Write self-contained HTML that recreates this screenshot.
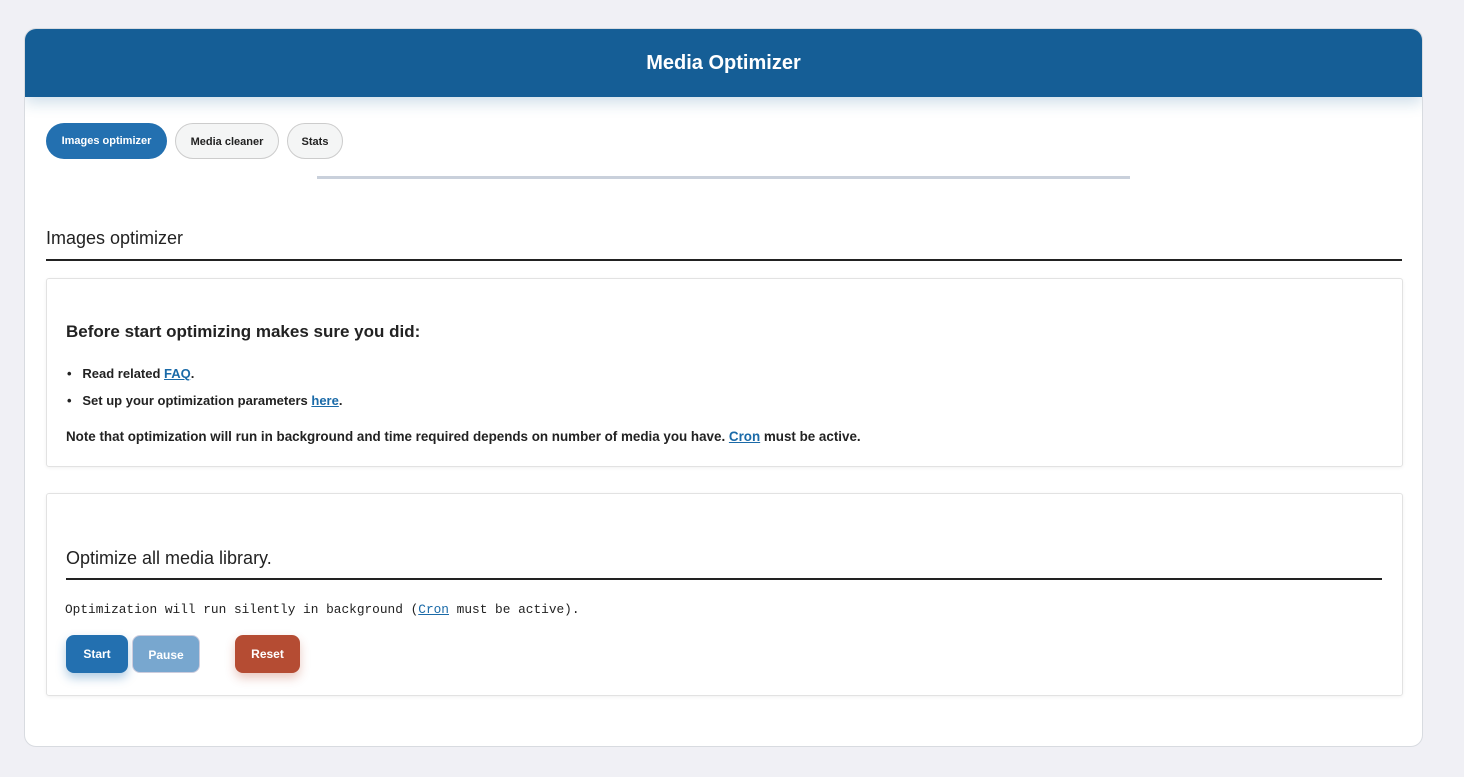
<!DOCTYPE html>
<html><head><meta charset="utf-8"><style>
body{margin:0;background:#f0f0f5;font-family:"Liberation Sans",sans-serif;color:#222;width:1464px;height:777px;overflow:hidden}
.wrap{position:absolute;left:24px;top:28px;width:1397px;height:717px;background:#fff;border:1px solid #d8dbe0;border-radius:12px;overflow:hidden}
.hdr{height:68px;background:#155e96;color:#fff;font-weight:bold;font-size:20px;text-align:center;line-height:68px;box-shadow:0 6px 14px rgba(21,94,150,.2)}
.tab{position:absolute;top:94px;height:36px;border-radius:18px;font-size:11px;font-weight:bold;line-height:36px;text-align:center;box-sizing:border-box}
.tab.a{background:#2370b0;color:#fff}
.tab.i{background:#f4f5f5;border:1px solid #ccc;color:#222}
.bar{position:absolute;left:292px;top:147px;width:813px;height:3px;background:#c9d0db}
h2{position:absolute;left:21px;top:199px;margin:0;font-size:18px;font-weight:normal}
.hl{position:absolute;left:21px;top:230px;width:1356px;height:2px;background:#222}
.box{position:absolute;left:21px;width:1355px;border:1px solid #e2e2e2;border-radius:3px;box-shadow:0 1px 3px rgba(0,0,0,.06)}
h3{margin:0;font-size:18px;font-weight:bold;color:#222}
.t{font-size:13px;font-weight:bold;position:absolute;left:20px}
a{color:#1a6aa8;text-decoration:underline}
.btn{position:absolute;top:141px;height:38px;border-radius:8px;color:#fff;font-size:12px;font-weight:bold;line-height:38px;text-align:center;box-sizing:border-box}
</style></head><body>
<div class="wrap">
<div class="hdr">Media Optimizer</div>
<div class="tab a" style="left:21px;width:121px">Images optimizer</div>
<div class="tab i" style="left:150px;width:104px">Media cleaner</div>
<div class="tab i" style="left:262px;width:56px">Stats</div>
<div class="bar"></div>
<h2>Images optimizer</h2>
<div class="hl"></div>
<div class="box" style="top:249px;height:187px">
<h3 style="position:absolute;left:19px;top:43px;font-size:17px">Before start optimizing makes sure you did:</h3>
<div class="t" style="top:87px">•&nbsp;&nbsp;&nbsp;Read related <a>FAQ</a>.</div>
<div class="t" style="top:114px">•&nbsp;&nbsp;&nbsp;Set up your optimization parameters <a>here</a>.</div>
<div class="t" style="top:150px;left:19px;font-size:13.4px">Note that optimization will run in background and time required depends on number of media you have. <a>Cron</a> must be active.</div>
</div>
<div class="box" style="top:464px;height:201px">
<h3 style="position:absolute;left:19px;top:54px;font-weight:normal;font-size:18px">Optimize all media library.</h3>
<div style="position:absolute;left:19px;top:84px;width:1316px;height:2px;background:#222"></div>
<div style="position:absolute;left:18px;top:108px;font-family:'Liberation Mono',monospace;font-size:12.8px">Optimization will run silently in background (<a>Cron</a> must be active).</div>
<div class="btn" style="left:19px;width:62px;background:#2370b0;box-shadow:0 5px 10px rgba(35,112,176,.35)">Start</div>
<div class="btn" style="left:85px;width:68px;background:#78a7cf;border:1px solid #ccd">Pause</div>
<div class="btn" style="left:188px;width:65px;background:#b54c33;box-shadow:0 5px 10px rgba(181,76,51,.3)">Reset</div>
</div>
</div>
</body></html>
